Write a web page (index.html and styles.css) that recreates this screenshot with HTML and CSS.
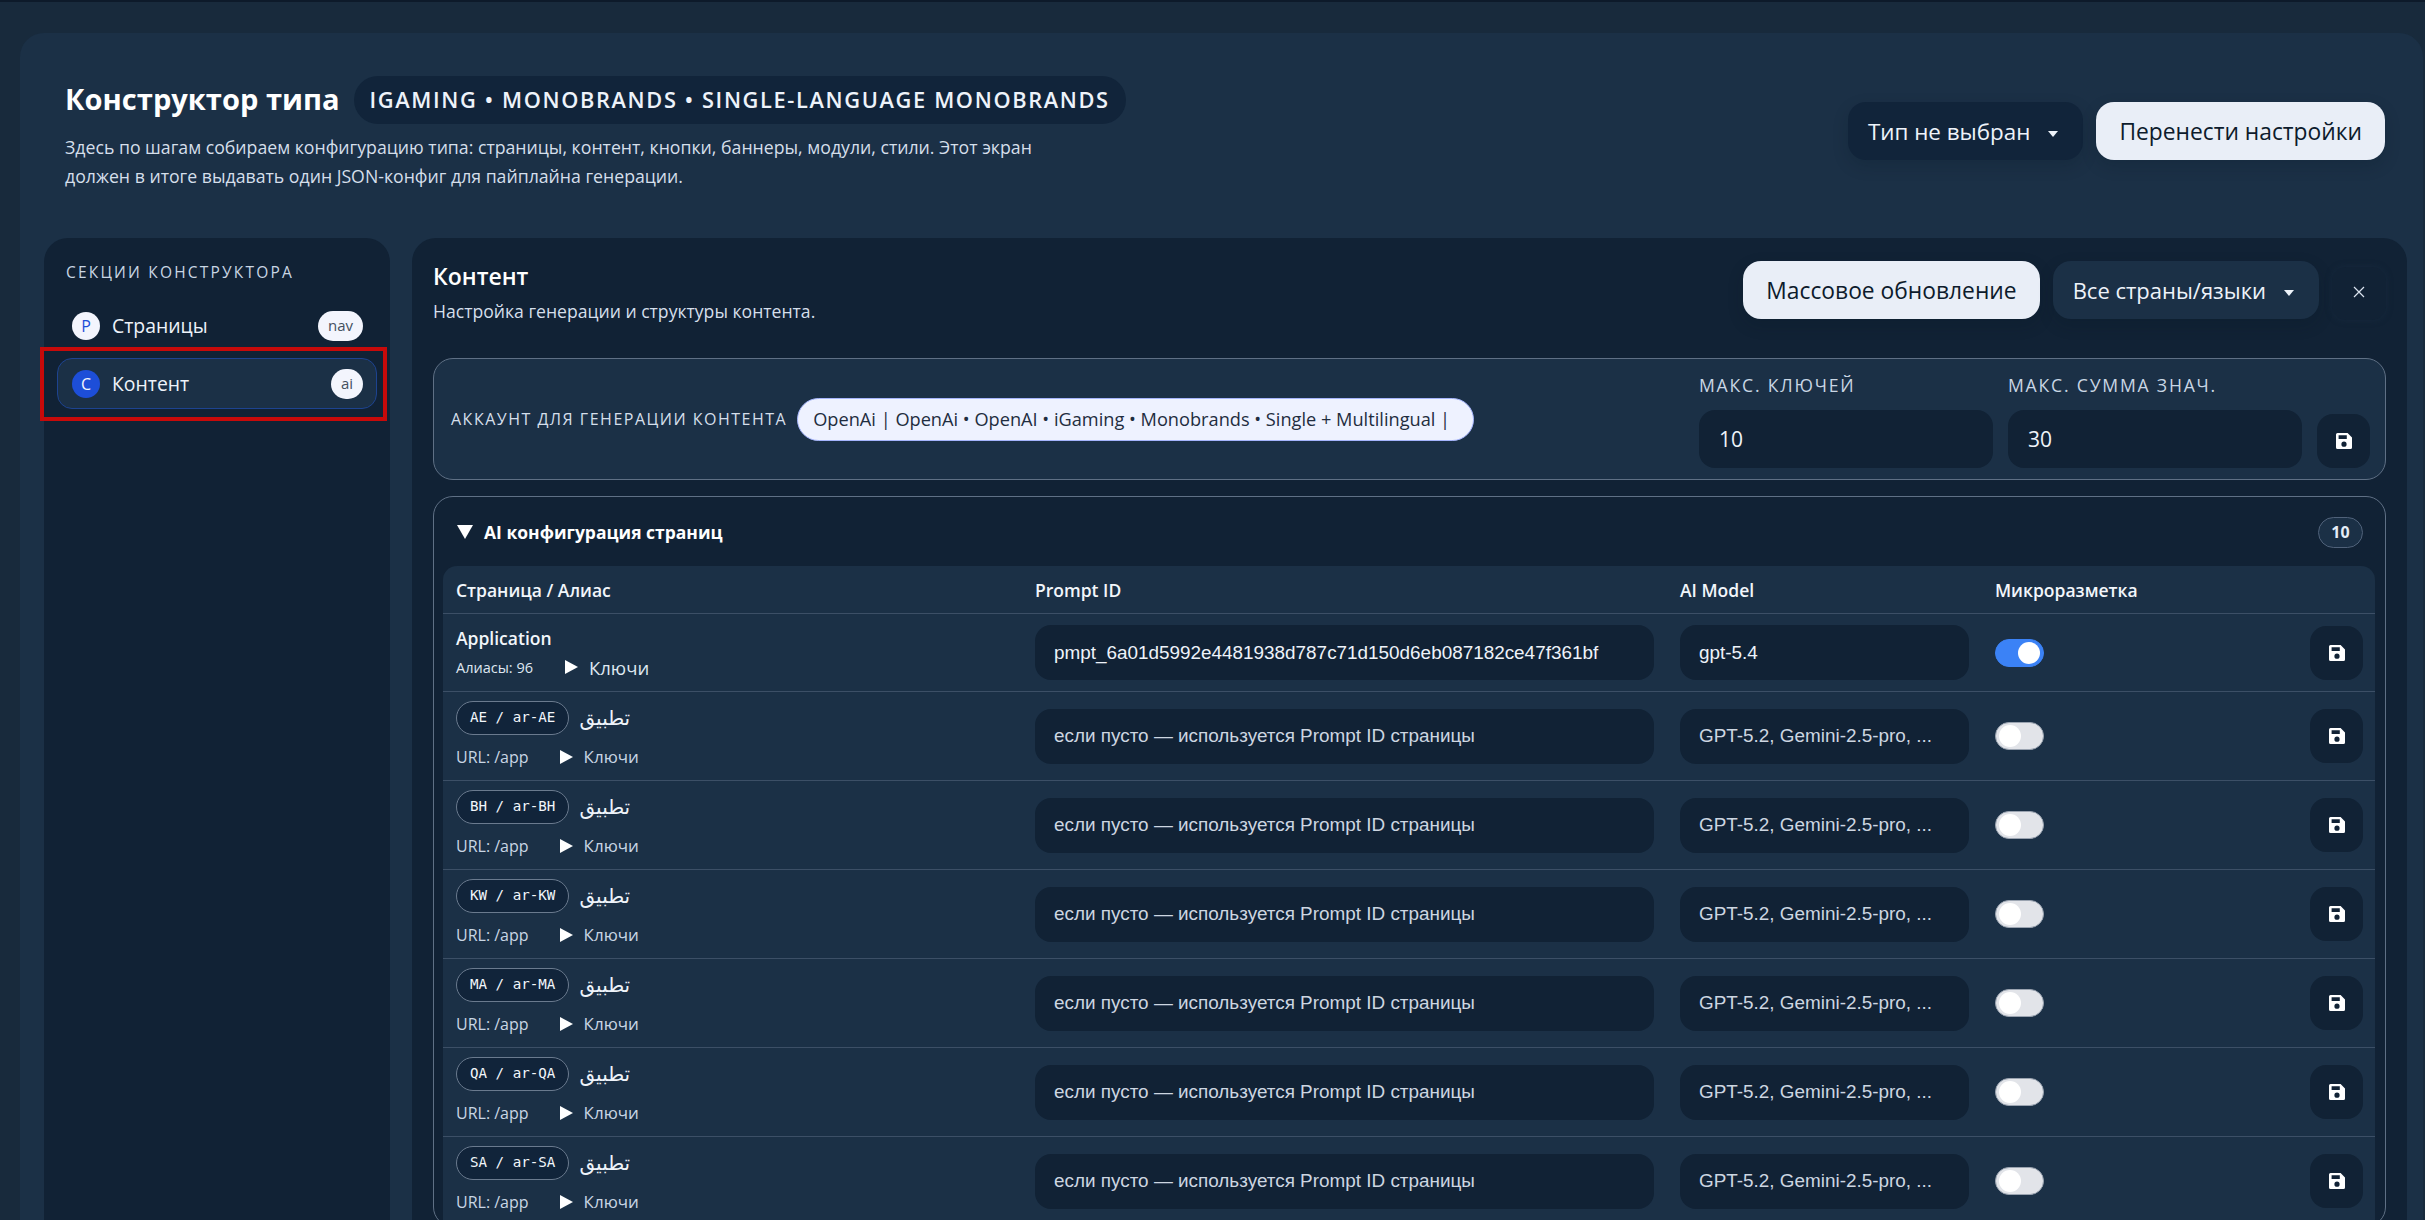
FILE: index.html
```html
<!DOCTYPE html>
<html lang="ru">
<head>
    <meta charset="UTF-8">
    <title>Конструктор типа</title>
    <link rel="stylesheet" href="styles.css">
</head>
<body>
    <svg class="icon-defs" width="0" height="0">
        <symbol id="save" viewBox="0 0 16 16">
            <path fill-rule="evenodd" d="M1.5 0H11.6L16 4.4V14.5A1.5 1.5 0 0 1 14.5 16H1.5A1.5 1.5 0 0 1 0 14.5V1.5A1.5 1.5 0 0 1 1.5 0ZM2.6 2.2V6H10.8V2.2ZM8 8.6A2.6 2.6 0 1 0 8 13.8A2.6 2.6 0 1 0 8 8.6Z"/>
        </symbol>
    </svg>
    <div class="shell">
        <div class="top-header">
            <div class="top-left">
                <div class="title-line">
                    <h1 class="page-title">Конструктор типа</h1>
                    <span class="crumb-pill">iGaming • Monobrands • Single-language monobrands</span>
                </div>
                <p class="page-desc">Здесь по шагам собираем конфигурацию типа: страницы, контент, кнопки, баннеры, модули, стили. Этот экран должен в итоге выдавать один JSON-конфиг для пайплайна генерации.</p>
            </div>
            <div class="top-actions">
                <button class="btn btn-dark">Тип не выбран<span class="caret"></span></button>
                <button class="btn btn-light">Перенести настройки</button>
            </div>
        </div>
        <div class="workspace">
            <aside class="sidebar">
                <div class="sidebar-title">Секции конструктора</div>
                <div class="nav-item">
                    <span class="nav-dot">P</span>
                    <span class="nav-name">Страницы</span>
                    <span class="nav-tag">nav</span>
                </div>
                <div class="nav-item active">
                    <span class="nav-dot">C</span>
                    <span class="nav-name">Контент</span>
                    <span class="nav-tag">ai</span>
                </div>
            </aside>
            <main class="content">
                <div class="content-head">
                    <div class="content-title">
                        <h2>Контент</h2>
                        <p>Настройка генерации и структуры контента.</p>
                    </div>
                    <button class="btn btn-light">Массовое обновление</button>
                    <button class="btn btn-mid">Все страны/языки<span class="caret"></span></button>
                    <button class="btn-close">
                        <svg width="14" height="14" viewBox="0 0 14 14"><path d="M2 2L12 12M12 2L2 12" stroke="currentColor" stroke-width="1.2"/></svg>
                    </button>
                </div>
                <div class="account-card">
                    <span class="account-label">Аккаунт для генерации контента</span>
                    <span class="account-pill">OpenAi | OpenAi • OpenAI • iGaming • Monobrands • Single + Multilingual |</span>
                    <div class="limits">
                        <label class="limit">
                            <span class="limit-label">Макс. ключей</span>
                            <input class="field field-tall" value="10">
                        </label>
                        <label class="limit">
                            <span class="limit-label">Макс. сумма знач.</span>
                            <input class="field field-tall" value="30">
                        </label>
                        <button class="save-btn"><svg class="save-icon"><use href="#save"/></svg></button>
                    </div>
                </div>
                <section class="ai-card">
                    <div class="ai-head">
                        <span class="tri-down"></span>
                        <span class="ai-title">AI конфигурация страниц</span>
                        <span class="count-badge">10</span>
                    </div>
                    <table class="ai-table">
                        <colgroup>
                            <col class="col-page"><col class="col-prompt"><col class="col-model"><col class="col-micro"><col class="col-save">
                        </colgroup>
                        <thead>
                            <tr><th>Страница / Алиас</th><th>Prompt ID</th><th>AI Model</th><th>Микроразметка</th><th></th></tr>
                        </thead>
                        <tbody>
                            <tr class="row-main">
                                <td>
                                    <div class="page-name">Application</div>
                                    <div class="page-meta"><span class="alias-count">Алиасы: 96</span><span class="keys keys-big"><span class="tri-right"></span>Ключи</span></div>
                                </td>
                                <td><input class="field" value="pmpt_6a01d5992e4481938d787c71d150d6eb087182ce47f361bf"></td>
                                <td><input class="field" value="gpt-5.4"></td>
                                <td><span class="switch on"></span></td>
                                <td class="cell-save"><button class="save-btn"><svg class="save-icon"><use href="#save"/></svg></button></td>
                            </tr>
                            <tr>
                                <td>
                                    <div class="alias-line"><span class="code-pill">AE / ar-AE</span><span class="alias-name" dir="rtl">تطبيق</span></div>
                                    <div class="page-meta"><span class="alias-url">URL: /app</span><span class="keys"><span class="tri-right"></span>Ключи</span></div>
                                </td>
                                <td><input class="field" placeholder="если пусто — используется Prompt ID страницы"></td>
                                <td><input class="field" placeholder="GPT-5.2, Gemini-2.5-pro, ..."></td>
                                <td><span class="switch"></span></td>
                                <td class="cell-save"><button class="save-btn"><svg class="save-icon"><use href="#save"/></svg></button></td>
                            </tr>
                            <tr>
                                <td>
                                    <div class="alias-line"><span class="code-pill">BH / ar-BH</span><span class="alias-name" dir="rtl">تطبيق</span></div>
                                    <div class="page-meta"><span class="alias-url">URL: /app</span><span class="keys"><span class="tri-right"></span>Ключи</span></div>
                                </td>
                                <td><input class="field" placeholder="если пусто — используется Prompt ID страницы"></td>
                                <td><input class="field" placeholder="GPT-5.2, Gemini-2.5-pro, ..."></td>
                                <td><span class="switch"></span></td>
                                <td class="cell-save"><button class="save-btn"><svg class="save-icon"><use href="#save"/></svg></button></td>
                            </tr>
                            <tr>
                                <td>
                                    <div class="alias-line"><span class="code-pill">KW / ar-KW</span><span class="alias-name" dir="rtl">تطبيق</span></div>
                                    <div class="page-meta"><span class="alias-url">URL: /app</span><span class="keys"><span class="tri-right"></span>Ключи</span></div>
                                </td>
                                <td><input class="field" placeholder="если пусто — используется Prompt ID страницы"></td>
                                <td><input class="field" placeholder="GPT-5.2, Gemini-2.5-pro, ..."></td>
                                <td><span class="switch"></span></td>
                                <td class="cell-save"><button class="save-btn"><svg class="save-icon"><use href="#save"/></svg></button></td>
                            </tr>
                            <tr>
                                <td>
                                    <div class="alias-line"><span class="code-pill">MA / ar-MA</span><span class="alias-name" dir="rtl">تطبيق</span></div>
                                    <div class="page-meta"><span class="alias-url">URL: /app</span><span class="keys"><span class="tri-right"></span>Ключи</span></div>
                                </td>
                                <td><input class="field" placeholder="если пусто — используется Prompt ID страницы"></td>
                                <td><input class="field" placeholder="GPT-5.2, Gemini-2.5-pro, ..."></td>
                                <td><span class="switch"></span></td>
                                <td class="cell-save"><button class="save-btn"><svg class="save-icon"><use href="#save"/></svg></button></td>
                            </tr>
                            <tr>
                                <td>
                                    <div class="alias-line"><span class="code-pill">QA / ar-QA</span><span class="alias-name" dir="rtl">تطبيق</span></div>
                                    <div class="page-meta"><span class="alias-url">URL: /app</span><span class="keys"><span class="tri-right"></span>Ключи</span></div>
                                </td>
                                <td><input class="field" placeholder="если пусто — используется Prompt ID страницы"></td>
                                <td><input class="field" placeholder="GPT-5.2, Gemini-2.5-pro, ..."></td>
                                <td><span class="switch"></span></td>
                                <td class="cell-save"><button class="save-btn"><svg class="save-icon"><use href="#save"/></svg></button></td>
                            </tr>
                            <tr>
                                <td>
                                    <div class="alias-line"><span class="code-pill">SA / ar-SA</span><span class="alias-name" dir="rtl">تطبيق</span></div>
                                    <div class="page-meta"><span class="alias-url">URL: /app</span><span class="keys"><span class="tri-right"></span>Ключи</span></div>
                                </td>
                                <td><input class="field" placeholder="если пусто — используется Prompt ID страницы"></td>
                                <td><input class="field" placeholder="GPT-5.2, Gemini-2.5-pro, ..."></td>
                                <td><span class="switch"></span></td>
                                <td class="cell-save"><button class="save-btn"><svg class="save-icon"><use href="#save"/></svg></button></td>
                            </tr>
                        </tbody>
                    </table>
                </section>
            </main>
        </div>
    </div>
    <div class="callout"></div>
</body>
</html>
```

FILE: styles.css
```css
* {
    box-sizing: border-box;
}
html, body {
    height: 100%;
}
body {
    margin: 0;
    height: 1220px;
    overflow: hidden;
    background-color: #182a3c;
    border-top: 2px solid #0d1a2a;
    font-family: "Open Sans", "Noto Sans", "DejaVu Sans", sans-serif;
    color: #e5edf7;
}
h1, h2, p {
    margin: 0;
}
button, input {
    font-family: inherit;
}
.icon-defs {
    position: absolute;
}
.shell {
    margin: 31px 2px 0 20px;
    height: 1300px;
    background-color: #1b3046;
    border-radius: 24px;
    padding: 43px 16px 0 24px;
}
.top-header {
    display: flex;
    justify-content: space-between;
    align-items: flex-start;
    height: 162px;
    padding: 0 22px 0 21px;
}
.title-line {
    display: flex;
    align-items: center;
    gap: 14px;
}
.page-title {
    margin-top: -3px;
    font-size: 29.1px;
    font-weight: 700;
    color: #fff;
}
.crumb-pill {
    height: 48px;
    line-height: 48px;
    padding: 0 16px;
    border-radius: 24px;
    background-color: #11243a;
    font-size: 21.8px;
    font-weight: 600;
    text-transform: uppercase;
    letter-spacing: 1.64px;
    color: #eef3fa;
}
.page-desc {
    width: 1010px;
    margin-top: 9px;
    font-size: 17.7px;
    line-height: 29px;
    color: #d5dfeb;
}
.top-actions {
    display: flex;
    gap: 13px;
    margin-top: 26px;
}
.btn {
    height: 58px;
    padding: 0 20px;
    border: none;
    border-radius: 18px;
    font-size: 22.4px;
    white-space: nowrap;
    box-shadow: 0 6px 16px rgba(8, 20, 36, 0.18);
}
.btn-dark {
    padding-right: 25px;
    background-color: #11243a;
    color: #eef3fa;
}
.btn-mid {
    padding-right: 25px;
    background-color: #1b3046;
    color: #eef3fa;
    font-size: 22px;
}
.btn-light {
    padding: 0 23px;
    background-color: #e9eef7;
    color: #0d1b2c;
    font-size: 22.8px;
}
.caret {
    display: inline-block;
    margin-left: 18px;
    vertical-align: 3px;
    border-top: 6px solid currentColor;
    border-left: 5px solid transparent;
    border-right: 5px solid transparent;
}
.workspace {
    display: flex;
    gap: 22px;
    align-items: stretch;
}
.sidebar {
    width: 346px;
    height: 1040px;
    background-color: #112235;
    border-radius: 24px;
    padding: 23px 13px;
}
.sidebar-title {
    margin: 0 0 17px 9px;
    font-size: 15.5px;
    text-transform: uppercase;
    letter-spacing: 2.2px;
    color: #c9d6e4;
}
.nav-item {
    display: flex;
    align-items: center;
    height: 51px;
    margin-bottom: 7px;
    padding: 0 13px 0 14px;
    border: 1px solid transparent;
    border-radius: 15px;
    font-size: 19.4px;
    color: #eef3fa;
}
.nav-item.active {
    background-color: #1b3046;
    border-color: #1d4390;
}
.nav-dot {
    width: 28px;
    height: 28px;
    line-height: 28px;
    margin-right: 12px;
    border-radius: 50%;
    background-color: #f3f5fd;
    color: #1d4ed8;
    font-size: 16px;
    text-align: center;
}
.active .nav-dot {
    background-color: #1d4ed8;
    color: #f3f5fd;
}
.nav-name {
    flex: 1;
}
.nav-tag {
    height: 30px;
    line-height: 29px;
    padding: 0 10px;
    border-radius: 15px;
    background-color: #f3f5fd;
    color: #44505f;
    font-size: 15px;
}
.content {
    flex: 1;
    height: 1040px;
    background-color: #112235;
    border-radius: 24px;
    padding: 23px 21px;
}
.content-head {
    display: flex;
    align-items: flex-start;
    height: 97px;
    gap: 13px;
}
.content-title {
    flex: 1;
}
.content-title h2 {
    margin-top: -1px;
    font-size: 23px;
    font-weight: 600;
    line-height: 32px;
    color: #fff;
}
.content-title p {
    margin-top: 7px;
    font-size: 17.6px;
    color: #d5dfeb;
}
.btn-close {
    width: 54px;
    height: 53px;
    margin-top: 6px;
    border: none;
    border-radius: 14px;
    background-color: #112235;
    color: #dbe4ef;
    box-shadow: 0 0 6px rgba(27, 48, 70, 0.5);
}
.account-card {
    display: flex;
    align-items: center;
    height: 122px;
    padding: 0 15px 0 17px;
    background-color: #1b3046;
    border: 1px solid #5f7085;
    border-radius: 20px;
}
.account-label {
    font-size: 16px;
    text-transform: uppercase;
    letter-spacing: 1.5px;
    color: #d5dfeb;
    white-space: nowrap;
}
.account-pill {
    height: 43px;
    line-height: 40px;
    margin-left: 10px;
    padding: 0 23px 0 15px;
    background-color: #eef2ff;
    border: 1px solid #a5b4fc;
    border-radius: 22px;
    color: #1f2d40;
    font-size: 18.2px;
    white-space: nowrap;
}
.limits {
    display: flex;
    align-items: flex-end;
    gap: 15px;
    margin-left: auto;
    padding-top: 2px;
}
.limit {
    display: block;
    width: 294px;
}
.limit-label {
    display: block;
    margin-bottom: 13px;
    font-size: 17.6px;
    text-transform: uppercase;
    letter-spacing: 1.8px;
    color: #c9d6e4;
}
.field {
    display: block;
    width: 100%;
    height: 55px;
    padding: 0 19px;
    border: none;
    border-radius: 16px;
    background-color: #112235;
    color: #eef3fa;
    font-family: "Liberation Sans", Arial, sans-serif;
    font-size: 18.9px;
    outline: none;
}
.field::placeholder {
    color: #cdd6e1;
    opacity: 1;
}
.field-tall {
    height: 58px;
    padding: 0 20px;
    font-family: inherit;
    font-size: 21px;
}
.save-btn {
    display: flex;
    align-items: center;
    justify-content: center;
    width: 53px;
    height: 54px;
    border: none;
    border-radius: 16px;
    background-color: #112235;
    color: #fff;
}
.save-icon {
    width: 16px;
    height: 16px;
    fill: currentColor;
}
.ai-card {
    margin-top: 16px;
    padding: 0 10px 0 9px;
    border: 1px solid #5f7085;
    border-radius: 20px;
}
.ai-head {
    display: flex;
    align-items: center;
    height: 69px;
    padding: 1px 12px 0 14px;
}
.tri-down {
    width: 0;
    height: 0;
    margin-right: 11px;
    border-top: 14px solid #fff;
    border-left: 8px solid transparent;
    border-right: 8px solid transparent;
}
.ai-title {
    flex: 1;
    font-size: 17.5px;
    font-weight: 700;
    color: #fff;
}
.count-badge {
    width: 45px;
    height: 31px;
    line-height: 28px;
    border: 1px solid #50627a;
    border-radius: 16px;
    background-color: #1b3046;
    font-size: 16px;
    font-weight: 700;
    text-align: center;
}
.ai-table {
    width: 100%;
    table-layout: fixed;
    border-collapse: separate;
    border-spacing: 0;
    background-color: #1b3046;
    border-radius: 14px 14px 0 0;
}
.col-page {
    width: 579px;
}
.col-prompt {
    width: 645px;
}
.col-model {
    width: 315px;
}
.col-save {
    width: 78px;
}
.ai-table th {
    height: 48px;
    padding: 0 13px;
    border-bottom: 1px solid #3c4f66;
    font-size: 17.5px;
    font-weight: 600;
    text-align: left;
    color: #f2f6fb;
}
.ai-table td {
    height: 89px;
    padding: 0 13px;
    border-bottom: 1px solid #3c4f66;
}
.row-main td {
    height: 78px;
}
.page-name {
    font-size: 17.5px;
    font-weight: 600;
    color: #f2f6fb;
}
.page-meta {
    display: flex;
    align-items: center;
    margin-top: 10px;
    margin-bottom: 3px;
    font-size: 16px;
    color: #c9d6e4;
}
.row-main .page-meta {
    margin-top: 5px;
    margin-bottom: 0;
}
.alias-count {
    font-size: 14.5px;
    color: #dfe7f1;
}
.alias-url {
    color: #c9d6e4;
}
.keys {
    display: flex;
    align-items: center;
    margin-left: 31px;
    font-size: 17px;
}
.keys-big {
    margin-left: 32px;
    font-size: 18.5px;
    color: #dfe7f1;
}
.tri-right {
    width: 0;
    height: 0;
    margin-right: 11px;
    border-left: 13px solid #fff;
    border-top: 7px solid transparent;
    border-bottom: 7px solid transparent;
}
.alias-line {
    display: flex;
    align-items: center;
    gap: 10px;
}
.code-pill {
    height: 34px;
    line-height: 31px;
    padding: 0 13px;
    border: 1px solid #6a7a8e;
    border-radius: 17px;
    background-color: #11243a;
    font-family: "DejaVu Sans Mono", "Liberation Mono", monospace;
    font-size: 14.2px;
    color: #f2f6fb;
    white-space: nowrap;
}
.alias-name {
    font-family: "DejaVu Sans", sans-serif;
    font-size: 20px;
    color: #eef3fa;
}
.switch {
    display: block;
    position: relative;
    width: 49px;
    height: 28px;
    border-radius: 14px;
    background-color: #e2e4e9;
    border: 1px solid #9aa3b0;
}
.switch::after {
    content: "";
    position: absolute;
    left: 3px;
    top: 2px;
    width: 22px;
    height: 22px;
    border-radius: 50%;
    background-color: #fff;
}
.switch.on {
    background-color: #3b82f6;
    border-color: #3b82f6;
}
.switch.on::after {
    left: 22px;
}
.callout {
    position: absolute;
    left: 40px;
    top: 347px;
    width: 347px;
    height: 74px;
    border: 4px solid #c70a0a;
}
```
